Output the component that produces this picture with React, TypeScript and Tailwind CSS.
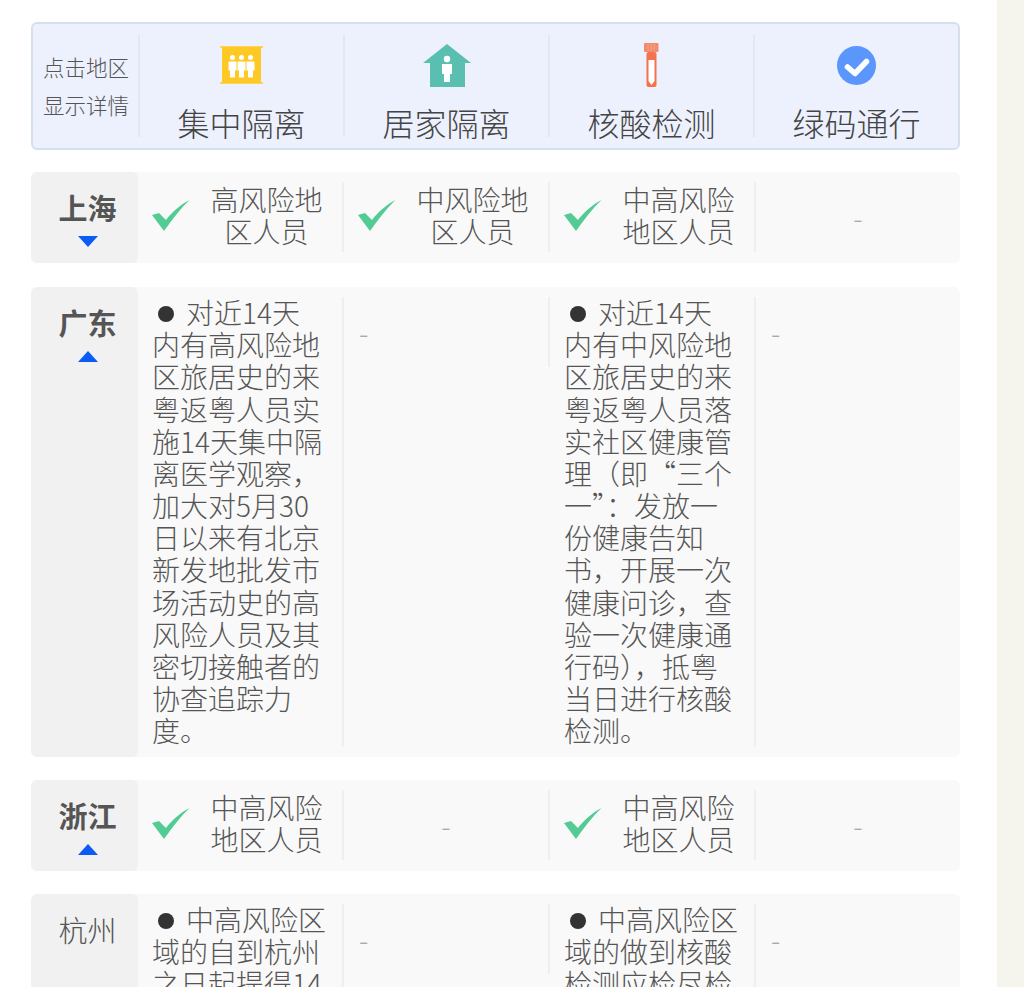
const sans = "font-['Noto_Sans_CJK_SC','Noto_Sans',sans-serif]";

function ShieldIcon() {
  return (
    <svg width="43" height="38" viewBox="0 0 43 38">
      <rect x="0" y="0" width="43" height="2" fill="#fdd45a" />
      <rect x="0" y="36" width="43" height="2" fill="#fdd45a" />
      <rect x="2" y="1" width="39" height="36" fill="#fec925" />
      {[12.5, 21.5, 30.5].map((x) => (
        <g key={x} fill="#fff">
          <circle cx={x} cy="11.500" r="2.500" />
          <path d={`M${x - 4} 15.500h8v9h-1.500v7h-5v-7h-1.500z`} />
        </g>
      ))}
    </svg>
  );
}

function HomeIcon() {
  return (
    <svg width="48" height="43" viewBox="0 0 48 43">
      <path d="M24 0 48 19H42V43H7V19H0z" fill="#5abfb1" />
      <circle cx="24" cy="15" r="3.200" fill="#fff" />
      <path d="M19 20h10v10h-2v8h-6v-8h-2z" fill="#fff" />
    </svg>
  );
}

function TubeIcon() {
  return (
    <svg width="15" height="44" viewBox="0 0 15 44">
      <rect x="0" y="0" width="14.500" height="9" rx="1" fill="#f28a6c" />
      <path d="M4 1v7M7 1v7M10 1v7" stroke="#f5a48c" strokeWidth="1" />
      <rect x="2.500" y="9" width="10" height="35" rx="2" fill="#f4734c" />
      <path d="M4.500 17h6v21l-3 4-3-4z" fill="#fff" />
    </svg>
  );
}

function PassIcon() {
  return (
    <svg width="39" height="39" viewBox="0 0 39 39">
      <circle cx="19.500" cy="19.500" r="19.500" fill="#5b96fd" />
      <path d="M10.500 21 18 27.500 29.500 15.500" fill="none" stroke="#fff" strokeWidth="5.500" strokeLinecap="round" strokeLinejoin="round" />
    </svg>
  );
}

function Tick() {
  return (
    <svg width="38" height="31" viewBox="0 0 38 31" className="shrink-0">
      <path d="M0 15 7 13 14 20C20 12 28 5 37.500 0 28 9 20 20 12 31z" fill="#52cb95" />
    </svg>
  );
}

function Caret({ up }: { up?: boolean }) {
  return (
    <svg width="20" height="11" viewBox="0 0 20 11">
      <path d={up ? "M10 0 20 11H0z" : "M0 0H20L10 11z"} fill="#0a5cf5" />
    </svg>
  );
}

const heads = [
  { label: "集中隔离", icon: <ShieldIcon /> },
  { label: "居家隔离", icon: <HomeIcon /> },
  { label: "核酸检测", icon: <TubeIcon /> },
  { label: "绿码通行", icon: <PassIcon /> },
];

function Header() {
  return (
    <div className="flex h-[128px] w-[929px] rounded-md border-2 border-[#d5e0ec] bg-[#ecf1fd] py-[11px]">
      <div className="flex w-[105px] shrink-0 flex-col items-center justify-center gap-[10px] pb-[1px] pl-[1px] text-[21.5px] leading-[28px] font-light text-[#555]">
        <span>点击地区</span>
        <span>显示详情</span>
      </div>
      {heads.map((h) => (
        <div key={h.label} className="flex w-[205px] flex-col items-center border-l-2 border-[#e1e7f3]">
          <div className="mt-[7px] flex h-[46px] items-center">{h.icon}</div>
          <div className="mt-[21px] text-[32px] leading-[26px] font-light text-[#444]">{h.label}</div>
        </div>
      ))}
    </div>
  );
}

function Check({ lines }: { lines: string }) {
  return (
    <div className="flex h-[70px] items-center pb-[4px] pl-[14px]">
      <Tick />
      <div className="ml-[14px] w-[125px] text-center text-[28px] leading-[32px] font-light text-[#555]">{lines}</div>
    </div>
  );
}

function Dash({ center }: { center?: boolean }) {
  return (
    <div
      className={`flex h-[70px] items-center text-[28px] font-light text-[#aaa] ${
        center ? "justify-center" : "pl-[15px]"
      }`}
    >
      -
    </div>
  );
}

function Para({ text }: { text: string }) {
  return (
    <div className="-mt-[1px] w-[188.500px] pl-[14px] text-[28px] leading-[32.17px] font-light text-[#555]">
      <span className="mr-[12px] ml-[6px] inline-block size-[16px] rounded-full bg-[#333] align-[2px]" />
      {text}
    </div>
  );
}

function Row({
  name,
  bold,
  up,
  down,
  gap,
  h,
  cells,
}: {
  name: string;
  bold?: boolean;
  up?: boolean;
  down?: boolean;
  gap: string;
  h: string;
  cells: { node: React.ReactNode; full?: boolean }[];
}) {
  return (
    <div className={`flex w-[929px] rounded-md bg-[#f9f9f9] ${gap} ${h}`}>
      <div
        className={`flex w-[107px] shrink-0 flex-col items-center rounded-md bg-[#f1f1f1] pt-[17px] pl-[6px] text-[29px] leading-[36px] text-[#555] ${
          bold ? "font-bold" : "font-light"
        }`}
      >
        <span>{name}</span>
        {(up || down) && (
          <span className="mt-[10.500px] flex">
            <Caret up={up} />
          </span>
        )}
      </div>
      <div className="grid flex-1 grid-cols-[206px_206px_206px_204px] items-start py-[10px]">
        {cells.map((c, i) => (
          <div
            key={i}
            className={`${i < 3 ? "border-r-2 border-[#eeeff3]" : ""} ${c.full ? "self-stretch" : ""}`}
          >
            {c.node}
          </div>
        ))}
      </div>
    </div>
  );
}

export default function App() {
  return (
    <div className={`flex h-[987px] overflow-hidden bg-white ${sans}`}>
      <div className="w-[997px] shrink-0 pt-[22px] pl-[31px]">
        <Header />
        <Row
          name="上海"
          bold
          down
          gap="mt-[22px]"
          h="h-[91px]"
          cells={[
            { node: <Check lines="高风险地区人员" /> },
            { node: <Check lines="中风险地区人员" /> },
            { node: <Check lines="中高风险地区人员" /> },
            { node: <Dash center /> },
          ]}
        />
        <Row
          name="广东"
          bold
          up
          gap="mt-[24px]"
          h="h-[470px]"
          cells={[
            {
              full: true,
              node: (
                <Para text="对近14天内有高风险地区旅居史的来粤返粤人员实施14天集中隔离医学观察，加大对5月30日以来有北京新发地批发市场活动史的高风险人员及其密切接触者的协查追踪力度。" />
              ),
            },
            { node: <Dash /> },
            {
              full: true,
              node: (
                <Para text="对近14天内有中风险地区旅居史的来粤返粤人员落实社区健康管理（即“三个一”：发放一份健康告知书，开展一次健康问诊，查验一次健康通行码），抵粤当日进行核酸检测。" />
              ),
            },
            { node: <Dash /> },
          ]}
        />
        <Row
          name="浙江"
          bold
          up
          gap="mt-[23px]"
          h="h-[91px]"
          cells={[
            { node: <Check lines="中高风险地区人员" /> },
            { node: <Dash center /> },
            { node: <Check lines="中高风险地区人员" /> },
            { node: <Dash center /> },
          ]}
        />
        <Row
          name="杭州"
          gap="mt-[23px]"
          h="h-[300px]"
          cells={[
            { full: true, node: <Para text="中高风险区域的自到杭州之日起提得14天内核酸检测阴性证明" /> },
            { node: <Dash /> },
            { full: true, node: <Para text="中高风险区域的做到核酸检测应检尽检的要求" /> },
            { node: <Dash /> },
          ]}
        />
      </div>
      <div className="flex-1 bg-[#f5f5ed]" />
    </div>
  );
}
